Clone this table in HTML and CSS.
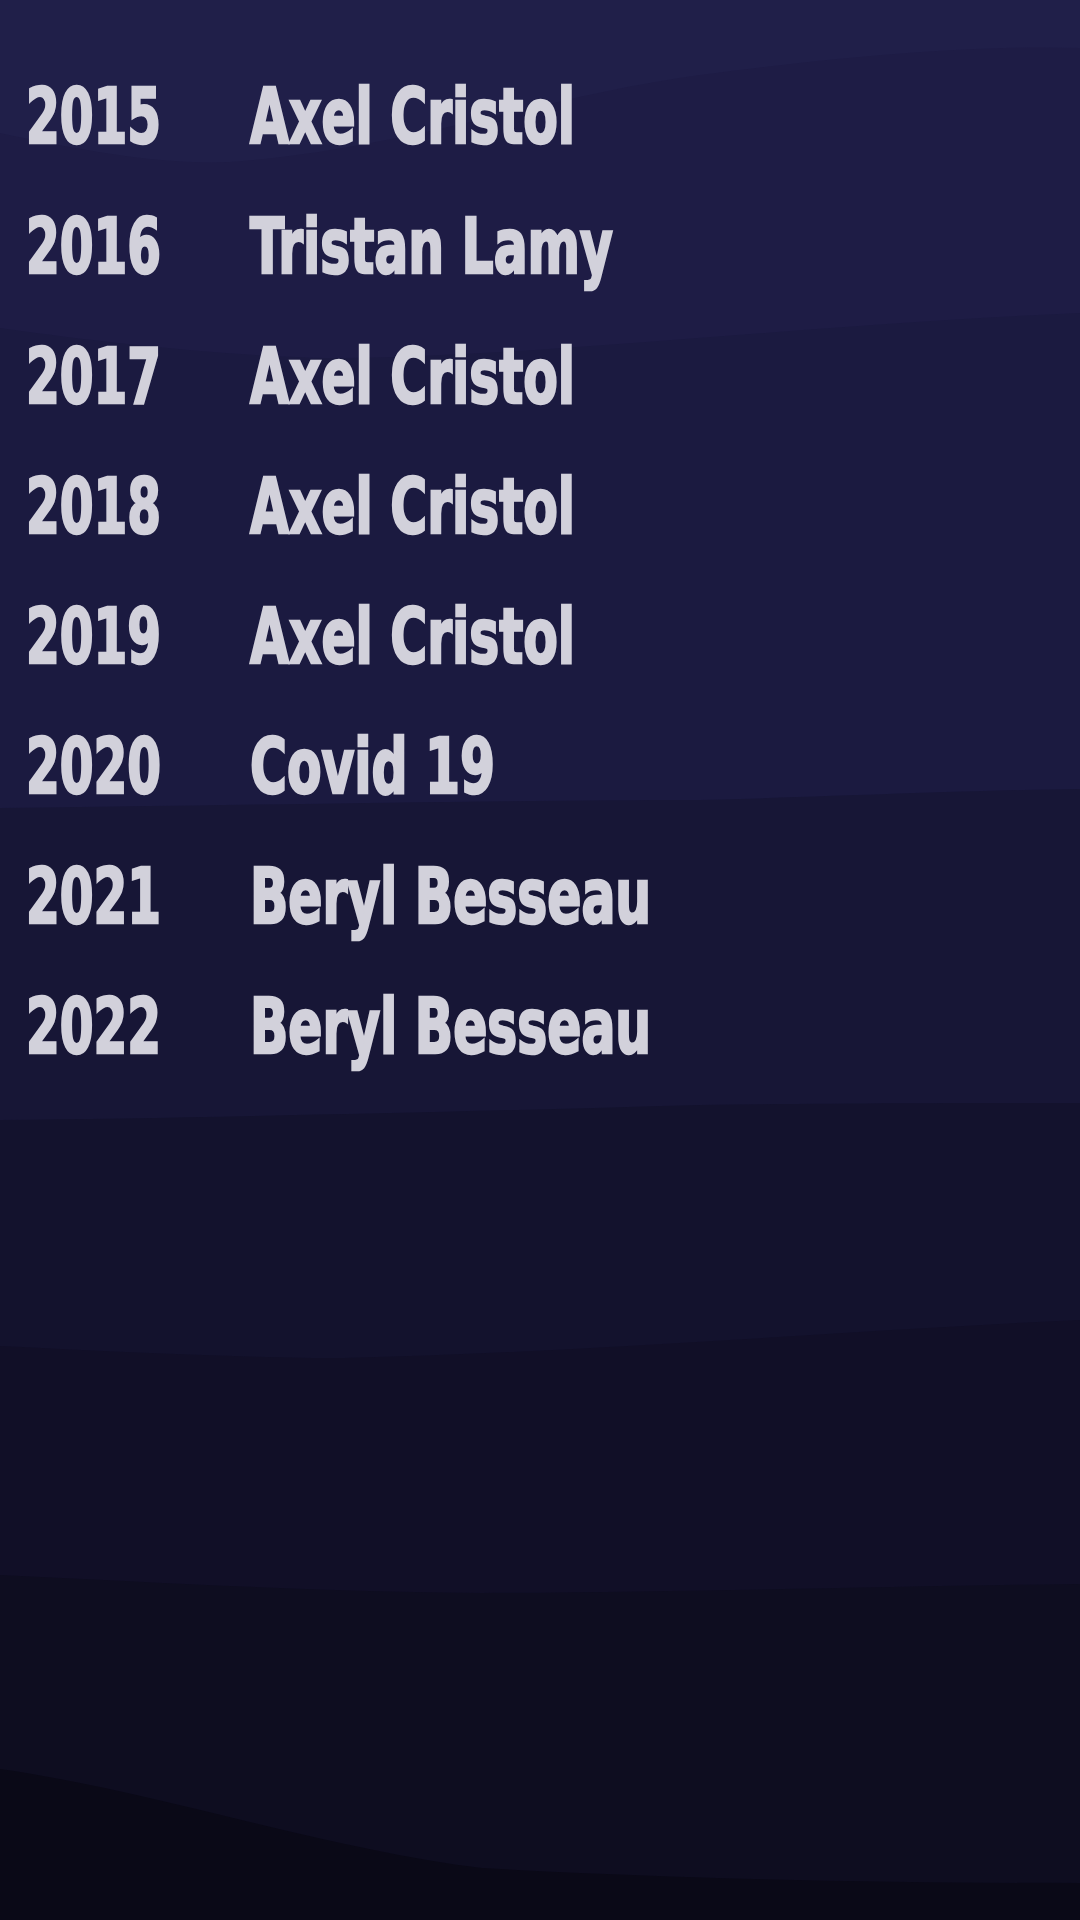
FILE: index.html
```html
<!DOCTYPE html>
<html lang="fr">
<head>
<meta charset="utf-8">
<title>Palmarès</title>
<link rel="stylesheet" href="styles.css">
</head>
<body>
<svg class="bg" viewBox="0 0 1080 1920" preserveAspectRatio="none" aria-hidden="true">
  <rect x="0" y="0" width="1080" height="1920" fill="#201f49"/>
  <path fill="#1e1c45" d="M0 133 C 80 150, 160 165, 230 162 C 400 150, 550 95, 700 75 C 850 55, 980 45, 1080 48 L1080 1920 L0 1920 Z"/>
  <path fill="#1b1a40" d="M0 328 C 120 345, 250 358, 345 358 C 560 355, 800 325, 1080 313 L1080 1920 L0 1920 Z"/>
  <path fill="#171636" d="M0 808 C 250 805, 500 800, 700 800 C 850 796, 980 790, 1080 789 L1080 1920 L0 1920 Z"/>
  <path fill="#13122d" d="M0 1120 C 200 1118, 450 1112, 700 1105 C 850 1103, 980 1103, 1080 1103 L1080 1920 L0 1920 Z"/>
  <path fill="#110f27" d="M0 1346 C 120 1352, 250 1358, 344 1358 C 600 1352, 850 1330, 1080 1320 L1080 1920 L0 1920 Z"/>
  <path fill="#0e0d20" d="M0 1575 C 150 1582, 320 1592, 482 1593 C 700 1592, 900 1586, 1080 1584 L1080 1920 L0 1920 Z"/>
  <path fill="#0a0917" d="M0 1769 C 150 1790, 330 1850, 482 1868 C 700 1880, 900 1883, 1080 1883 L1080 1920 L0 1920 Z"/>
</svg>
<main class="list">
  <div class="row"><span class="year">2015</span><span class="name">Axel Cristol</span></div>
  <div class="row"><span class="year">2016</span><span class="name">Tristan Lamy</span></div>
  <div class="row"><span class="year">2017</span><span class="name">Axel Cristol</span></div>
  <div class="row"><span class="year">2018</span><span class="name">Axel Cristol</span></div>
  <div class="row"><span class="year">2019</span><span class="name">Axel Cristol</span></div>
  <div class="row"><span class="year">2020</span><span class="name">Covid 19</span></div>
  <div class="row"><span class="year">2021</span><span class="name">Beryl Besseau</span></div>
  <div class="row"><span class="year">2022</span><span class="name">Beryl Besseau</span></div>
</main>
</body>
</html>
```
FILE: styles.css
```css
html, body {
  margin: 0;
  padding: 0;
  width: 1080px;
  height: 1920px;
  overflow: hidden;
  background: #0a0917;
}

.bg {
  position: absolute;
  left: 0;
  top: 0;
  width: 1080px;
  height: 1920px;
  z-index: 0;
}

.list {
  position: relative;
  z-index: 1;
  display: flex;
  flex-direction: column;
  padding: 52px 0 0 26px;
  font-family: "DejaVu Sans Condensed", "DejaVu Sans", sans-serif;
  font-weight: bold;
  font-size: 76px;
  line-height: 130px;
  color: #d2d1db;
  -webkit-text-stroke: 2.5px #d2d1db;
}

.row {
  display: grid;
  grid-template-columns: 224px auto;
  white-space: nowrap;
}

.year,
.name {
  display: inline-block;
  transform-origin: left center;
}

.year {
  transform: scaleX(0.71);
}

.name {
  transform: scaleX(0.736);
}
```
